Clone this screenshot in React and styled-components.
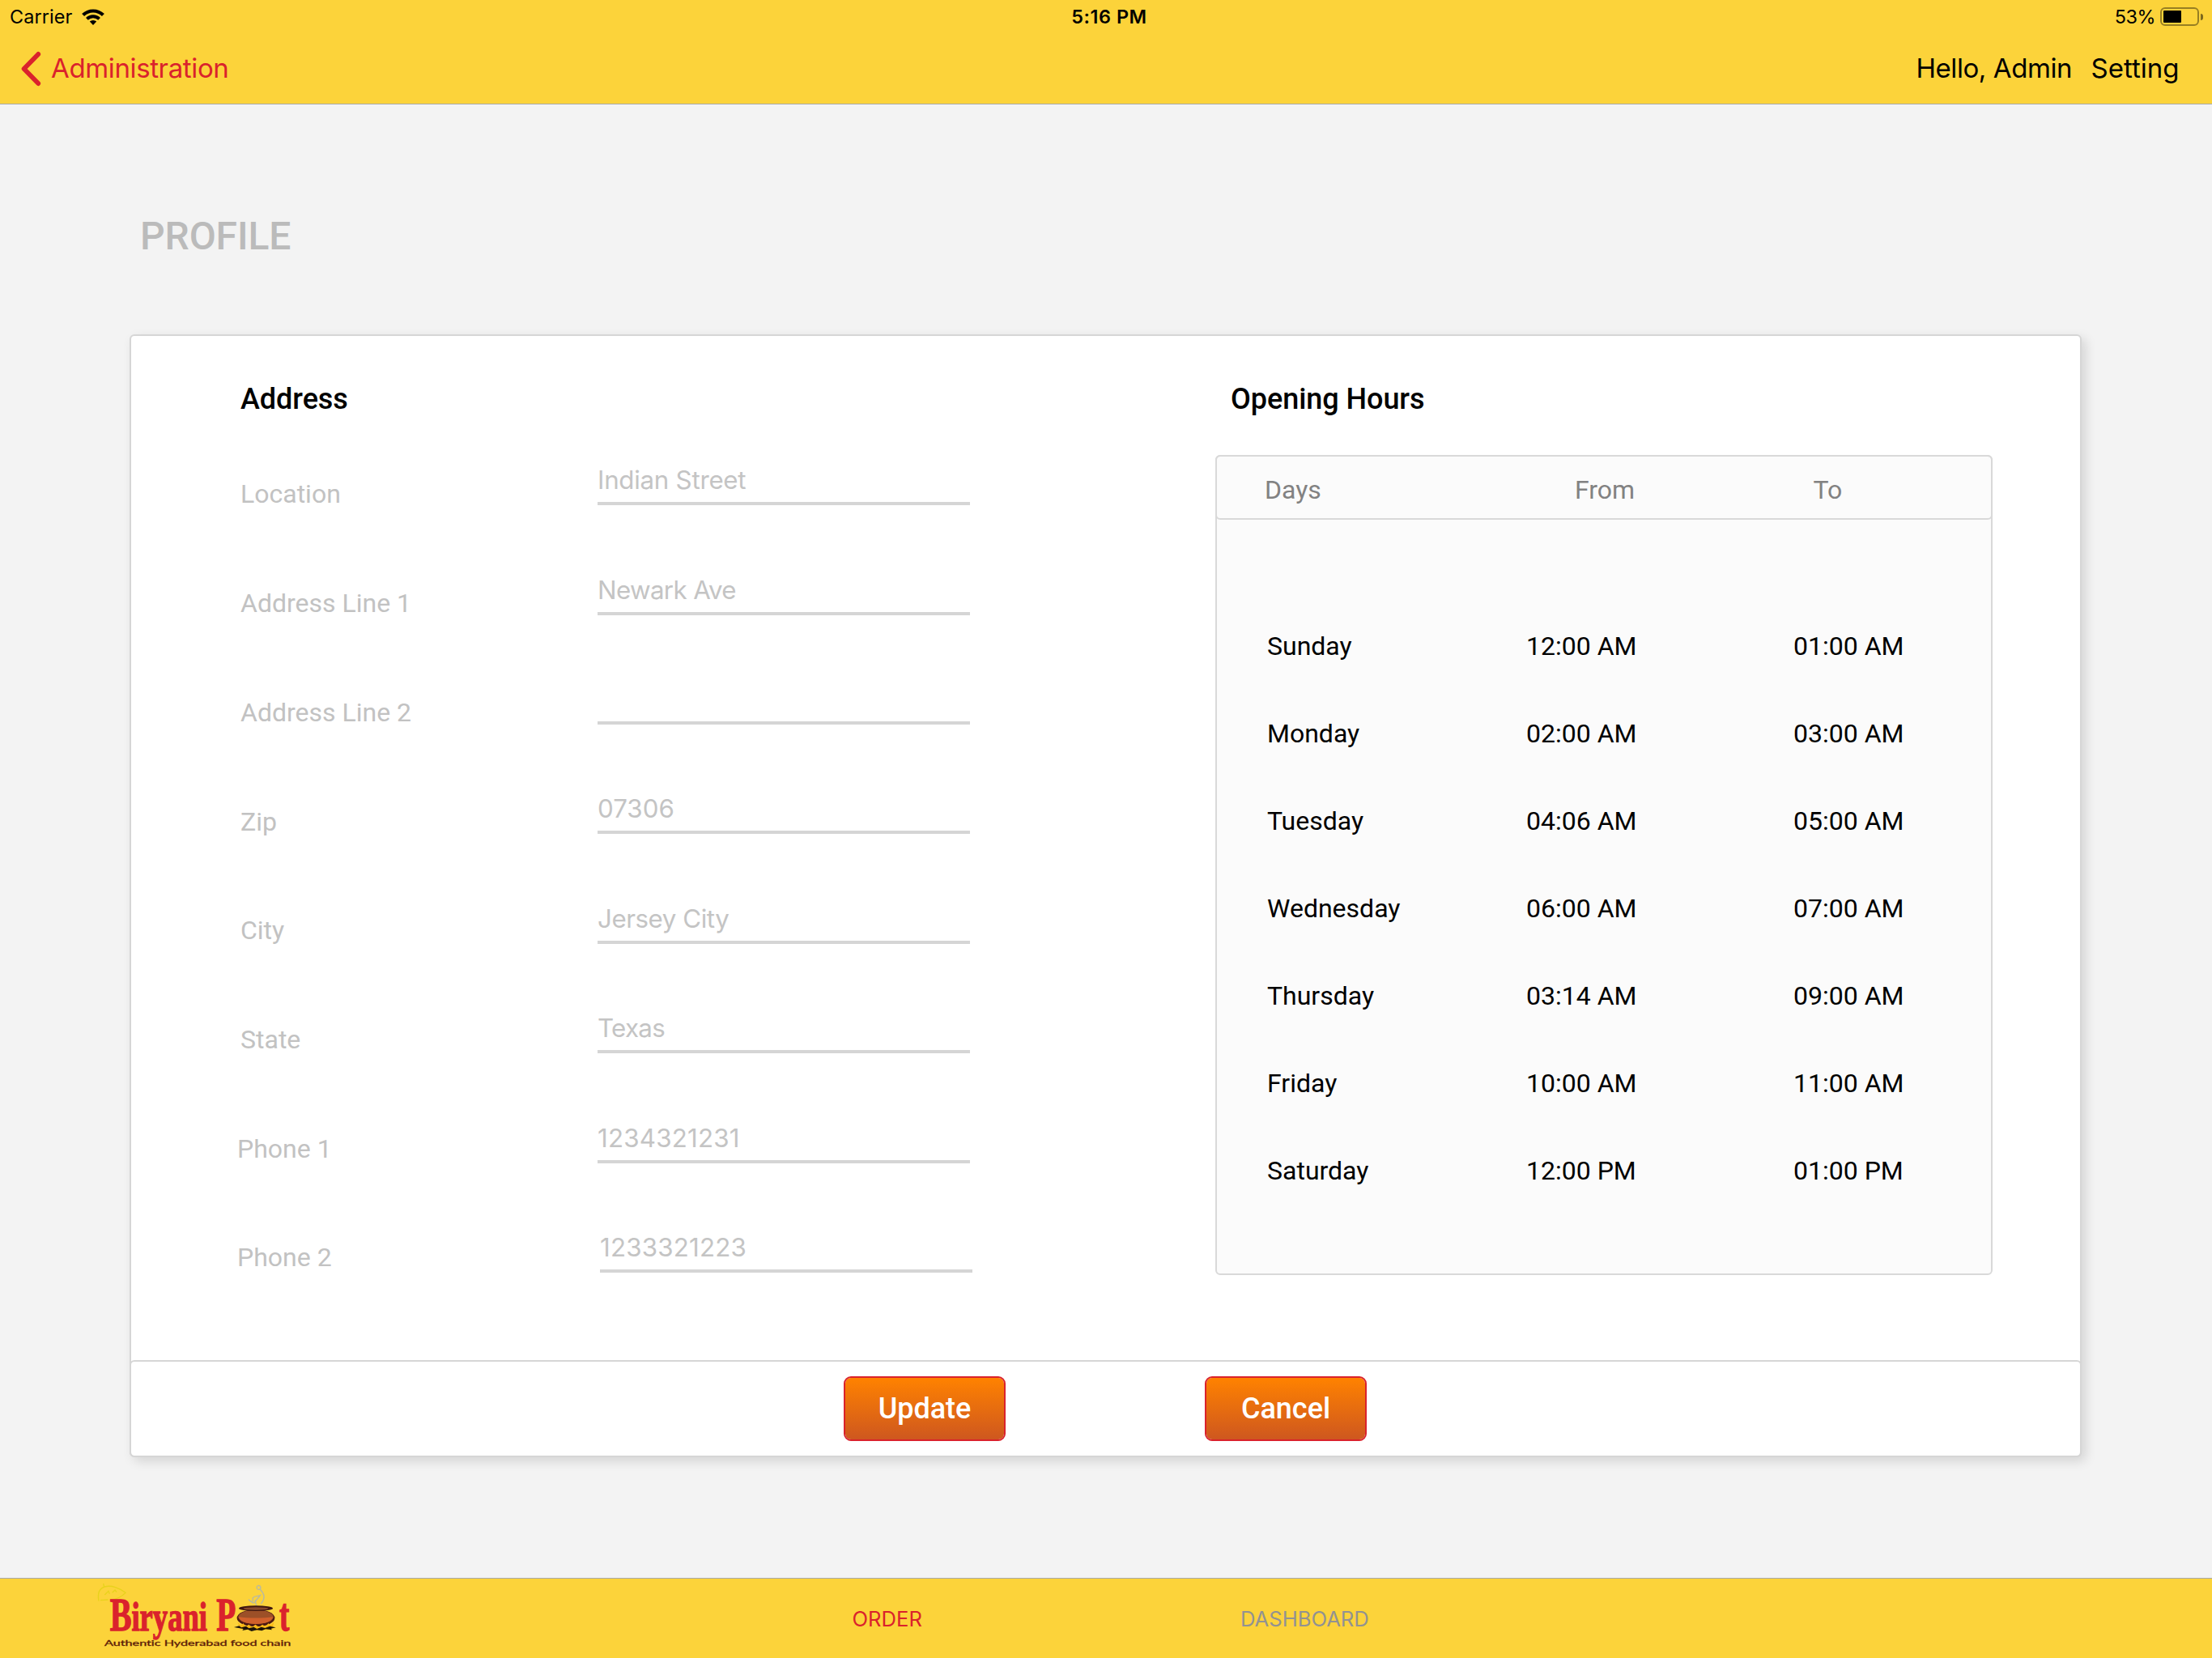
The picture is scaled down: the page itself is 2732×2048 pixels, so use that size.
import React from 'react';
import styled, { createGlobalStyle } from 'styled-components';

const SANS = "Inter, 'Liberation Sans', sans-serif";
const ROBOTO = "Roboto, 'Liberation Sans', sans-serif";
const YELLOW = '#fcd33a';
const RED = '#da222c';
const LINE = '#d6d6d6';

const GlobalStyle = createGlobalStyle`
  * { box-sizing: border-box; }
  body { margin: 0; background: #f3f3f3; }
`;

const Screen = styled.div`
  width: 2732px;
  height: 2048px;
  display: flex;
  flex-direction: column;
  background: #f3f3f3;
  font-family: ${ROBOTO};
  white-space: nowrap;
  overflow: hidden;
`;

const Header = styled.header`
  height: 129px;
  background: ${YELLOW};
  border-bottom: 1px solid #a8a8aa;
  font-family: ${SANS};
  color: #000;
`;

const StatusBar = styled.div`
  height: 41px;
  padding: 0 11px 0 12px;
  display: grid;
  grid-template-columns: 1fr auto 1fr;
  align-items: center;
  font-size: 23.4px;
  line-height: 41px;
`;

const StatusGroup = styled.div`
  display: flex;
  align-items: center;
  justify-content: ${(p) => (p.$end ? 'flex-end' : 'flex-start')};
  gap: ${(p) => (p.$end ? '6px' : '11.5px')};
  letter-spacing: ${(p) => (p.$end ? '-0.5px' : '0.1px')};
`;

const Clock = styled.span`
  padding-left: 7px;
  font-weight: 600;
  letter-spacing: 0.55px;
`;

const Battery = styled.div`
  display: flex;
  align-items: center;
  gap: 2px;
`;

const BatteryShell = styled.div`
  width: 48px;
  height: 23px;
  padding: 2px;
  border: 2px solid rgba(0, 0, 0, 0.4);
  border-radius: 6px;
`;

const BatteryLevel = styled.div`
  width: 22px;
  height: 15px;
  border-radius: 1px;
  background: #000;
`;

const BatteryNub = styled.div`
  width: 3px;
  height: 8px;
  border-radius: 0 3px 3px 0;
  background: rgba(0, 0, 0, 0.5);
`;

const NavBar = styled.nav`
  height: 87px;
  padding: 0 40.5px 0 25px;
  display: flex;
  align-items: center;
  justify-content: space-between;
  font-size: 33px;
  line-height: 84px;
`;

const BackLink = styled.div`
  display: flex;
  align-items: center;
  gap: 12px;
  color: ${RED};
`;

const NavText = styled.span`
  height: 86px;
  letter-spacing: ${(p) => p.$tracking || '0'};
`;

const NavActions = styled.div`
  display: flex;
  gap: 23.5px;
`;

const Main = styled.main`
  flex: 1;
  padding: 135px 161px 0 160px;
`;

const PageTitle = styled.h1`
  margin: 0 0 93px;
  padding-left: 13px;
  font-size: 48px;
  line-height: 56px;
  font-weight: 500;
  letter-spacing: -0.1px;
  color: #bbb;
`;

const Card = styled.section`
  height: 1387px;
  display: flex;
  flex-direction: column;
  background: #fff;
  border: 2px solid ${LINE};
  border-radius: 6px;
  box-shadow: 5px 5px 14px rgba(0, 0, 0, 0.13);
`;

const CardBody = styled.div`
  flex: 1;
  display: grid;
  grid-template-columns: 1339px 960px;
  padding-top: 57px;
`;

const SectionTitle = styled.h2`
  margin: 0;
  padding-left: ${(p) => p.$indent || '0'};
  font-size: 36px;
  line-height: 42px;
  font-weight: 500;
  letter-spacing: -0.05px;
  color: #000;
`;

const AddressSection = styled.div`
  padding-left: 135px;
`;

const AddressForm = styled.div`
  display: grid;
  grid-template-columns: 441px 463px;
`;

const LabelColumn = styled.div`
  padding-top: 76.4px;
`;

const FieldLabel = styled.div`
  height: 134.71px;
  margin-left: ${(p) => (p.$outdent ? '-4px' : '0')};
  font-size: 32px;
  line-height: 40px;
  color: #c2c2c2;
`;

const FieldColumn = styled.div`
  padding-top: 58.1px;
`;

const Field = styled.div`
  width: 460px;
  height: 52px;
  margin-bottom: 83.43px;
  margin-left: ${(p) => (p.$shifted ? '3px' : '0')};
  border-bottom: 4px solid #d5d5d5;
  font-family: ${SANS};
  font-size: 31.3px;
  line-height: 43px;
  letter-spacing: ${(p) => p.$tracking || 0}px;
  color: #c4c4c4;
`;

const HoursTable = styled.div`
  height: 1013px;
  margin-top: 48px;
  background: #fbfbfb;
  border: 2px solid #d9d9d9;
  border-radius: 6px;
`;

const HoursHead = styled.div`
  height: 80px;
  margin: -2px -2px 102px;
  padding: 6px 0 0 59px;
  display: grid;
  grid-template-columns: 383px 294.5px 1fr;
  border: 2px solid #d9d9d9;
  border-radius: 6px;
  font-size: 32px;
  line-height: 70px;
  color: #828282;
`;

const HoursRow = styled.div`
  display: grid;
  grid-template-columns: 320px 330px 1fr;
  padding-left: 62px;
  font-size: 32px;
  line-height: 108px;
  color: #000;
`;

const CardFooter = styled.div`
  height: 120px;
  margin: 0 -2px -2px;
  padding-left: 880px;
  display: flex;
  align-items: center;
  gap: 246px;
  border: 2px solid ${LINE};
  border-radius: 6px;
`;

const ActionButton = styled.button`
  width: 200px;
  height: 80px;
  padding: 0;
  border: 2px solid ${RED};
  border-radius: 9px;
  background: linear-gradient(#ff8200, #ce571f) padding-box;
  font: 500 36px/76px ${ROBOTO};
  color: #fff;
`;

const TabBar = styled.footer`
  height: 99px;
  display: grid;
  grid-template-columns: 1052.5px 479.5px 1fr;
  background: ${YELLOW};
  border-top: 1px solid #a8a8a8;
`;

const LogoCell = styled.div`
  padding-left: 100px;
`;

const Tab = styled.div`
  font-family: ${SANS};
  font-size: 25.6px;
  line-height: 99px;
  color: ${(p) => (p.$active ? RED : '#929292')};
`;

const WifiIcon = () => (
  <svg width="28" height="20" viewBox="0 0 28 20" fill="none" stroke="#000">
    <path d="M1.6 7.6A17.6 17.6 0 0 1 26.4 7.6" strokeWidth="4.2" />
    <path d="M6.4 12.3A10.9 10.9 0 0 1 21.6 12.3" strokeWidth="3.9" />
    <path d="M14 20L9.8 15.6A6 6 0 0 1 18.2 15.6Z" fill="#000" stroke="none" />
  </svg>
);

const ChevronIcon = () => (
  <svg width="26" height="44" viewBox="0 0 26 44" fill="none">
    <path
      d="M22.2 3.9L4.6 22L22.2 40.1"
      stroke={RED}
      strokeWidth="5.8"
      strokeLinecap="round"
      strokeLinejoin="round"
    />
  </svg>
);

const Logo = () => (
  <svg width="320" height="98" viewBox="0 60 960 294" fill="none">
    <g stroke="#e8d21c" strokeWidth="4">
      <path d="M66 143C60 112 70 96 88 90C112 83 142 94 165 112C150 128 132 137 108 138" />
      <path d="M86 90L83 78M88 120L102 106L106 116M116 112L126 102L132 110M72 140L100 138" />
    </g>
    <g
      fill={RED}
      stroke={RED}
      strokeWidth="4"
      fontFamily="'Liberation Serif', serif"
      fontWeight="700"
      fontSize="170"
    >
      <text x="107" y="251" fontSize="155" textLength="361" lengthAdjust="spacingAndGlyphs">
        <tspan fontSize="170">B</tspan>iryani
      </text>
      <text x="502" y="251" textLength="72" lengthAdjust="spacingAndGlyphs">P</text>
      <text x="735" y="251" textLength="37" lengthAdjust="spacingAndGlyphs">t</text>
    </g>
    <g stroke="#b9b9a0" strokeWidth="4" strokeLinecap="round">
      <path d="M652 95C648 84 664 82 666 92C667 102 652 102 652 95M664 100C682 118 682 136 668 152" />
      <path d="M622 138C634 152 640 146 636 132C644 120 652 128 664 122C656 136 640 140 650 158M630 144C638 154 646 150 646 140" />
    </g>
    <ellipse cx="648" cy="206" rx="70" ry="32" fill="#4d1a12" />
    <ellipse cx="648" cy="202" rx="65" ry="26" fill="#9c5028" />
    <path d="M584 202C616 207 680 207 712 202C706 219 684 228 648 228C612 228 590 219 584 202Z" fill="#d0602c" />
    <ellipse cx="648" cy="170" rx="63" ry="10" fill="#3f1710" />
    <ellipse cx="648" cy="171" rx="46" ry="5" fill="#8a4a2a" />
    <path
      d="M580 222L592 232L602 226L610 238L622 230L634 240L646 230L660 240L672 230L684 238L694 226L704 232L716 220L708 246L650 252L590 246Z"
      fill="#fbb814"
    />
    <path
      d="M567 240L586 235L594 241L612 236L622 244L640 239L652 246L668 239L682 243L700 236L722 241L704 245L708 250L684 247L670 253L652 250L632 255L618 248L598 252L602 246Z"
      fill="#1c1408"
    />
    <text
      x="87"
      y="308"
      fill="#5c1c08"
      stroke="#5c1c08"
      strokeWidth="1"
      fontFamily="Lato, 'Liberation Sans', sans-serif"
      fontSize="31"
      fontVariant="no-common-ligatures"
      textLength="691"
      lengthAdjust="spacingAndGlyphs"
    >
      Authentic Hyderabad food chain
    </text>
  </svg>
);

const FIELDS = [
  { label: 'Location', value: 'Indian Street', tracking: -0.27 },
  { label: 'Address Line 1', value: 'Newark Ave', tracking: -0.65 },
  { label: 'Address Line 2', value: '' },
  { label: 'Zip', value: '07306' },
  { label: 'City', value: 'Jersey City', tracking: -0.45 },
  { label: 'State', value: 'Texas', tracking: -0.7 },
  { label: 'Phone 1', value: '1234321231', tracking: 0.2, outdent: true },
  { label: 'Phone 2', value: '1233321223', tracking: 0.2, outdent: true, shifted: true },
];

const HOURS = [
  ['Sunday', '12:00 AM', '01:00 AM'],
  ['Monday', '02:00 AM', '03:00 AM'],
  ['Tuesday', '04:06 AM', '05:00 AM'],
  ['Wednesday', '06:00 AM', '07:00 AM'],
  ['Thursday', '03:14 AM', '09:00 AM'],
  ['Friday', '10:00 AM', '11:00 AM'],
  ['Saturday', '12:00 PM', '01:00 PM'],
];

export default function App() {
  return (
    <Screen>
      <GlobalStyle />
      <Header>
        <StatusBar>
          <StatusGroup>
            <span>Carrier</span>
            <WifiIcon />
          </StatusGroup>
          <Clock>5:16 PM</Clock>
          <StatusGroup $end>
            <span>53%</span>
            <Battery>
              <BatteryShell>
                <BatteryLevel />
              </BatteryShell>
              <BatteryNub />
            </Battery>
          </StatusGroup>
        </StatusBar>
        <NavBar>
          <BackLink>
            <ChevronIcon />
            <NavText $tracking="-0.37px">Administration</NavText>
          </BackLink>
          <NavActions>
            <NavText $tracking="-0.42px">Hello, Admin</NavText>
            <NavText>Setting</NavText>
          </NavActions>
        </NavBar>
      </Header>
      <Main>
        <PageTitle>PROFILE</PageTitle>
        <Card>
          <CardBody>
            <AddressSection>
              <SectionTitle>Address</SectionTitle>
              <AddressForm>
                <LabelColumn>
                  {FIELDS.map((f) => (
                    <FieldLabel key={f.label} $outdent={f.outdent}>{f.label}</FieldLabel>
                  ))}
                </LabelColumn>
                <FieldColumn>
                  {FIELDS.map((f) => (
                    <Field key={f.label} $shifted={f.shifted} $tracking={f.tracking}>{f.value}</Field>
                  ))}
                </FieldColumn>
              </AddressForm>
            </AddressSection>
            <div>
              <SectionTitle $indent="19px">Opening Hours</SectionTitle>
              <HoursTable>
                <HoursHead>
                  <span>Days</span>
                  <span>From</span>
                  <span>To</span>
                </HoursHead>
                {HOURS.map(([day, from, to]) => (
                  <HoursRow key={day}>
                    <span>{day}</span>
                    <span>{from}</span>
                    <span>{to}</span>
                  </HoursRow>
                ))}
              </HoursTable>
            </div>
          </CardBody>
          <CardFooter>
            <ActionButton>Update</ActionButton>
            <ActionButton>Cancel</ActionButton>
          </CardFooter>
        </Card>
      </Main>
      <TabBar>
        <LogoCell>
          <Logo />
        </LogoCell>
        <Tab $active>ORDER</Tab>
        <Tab>DASHBOARD</Tab>
      </TabBar>
    </Screen>
  );
}
